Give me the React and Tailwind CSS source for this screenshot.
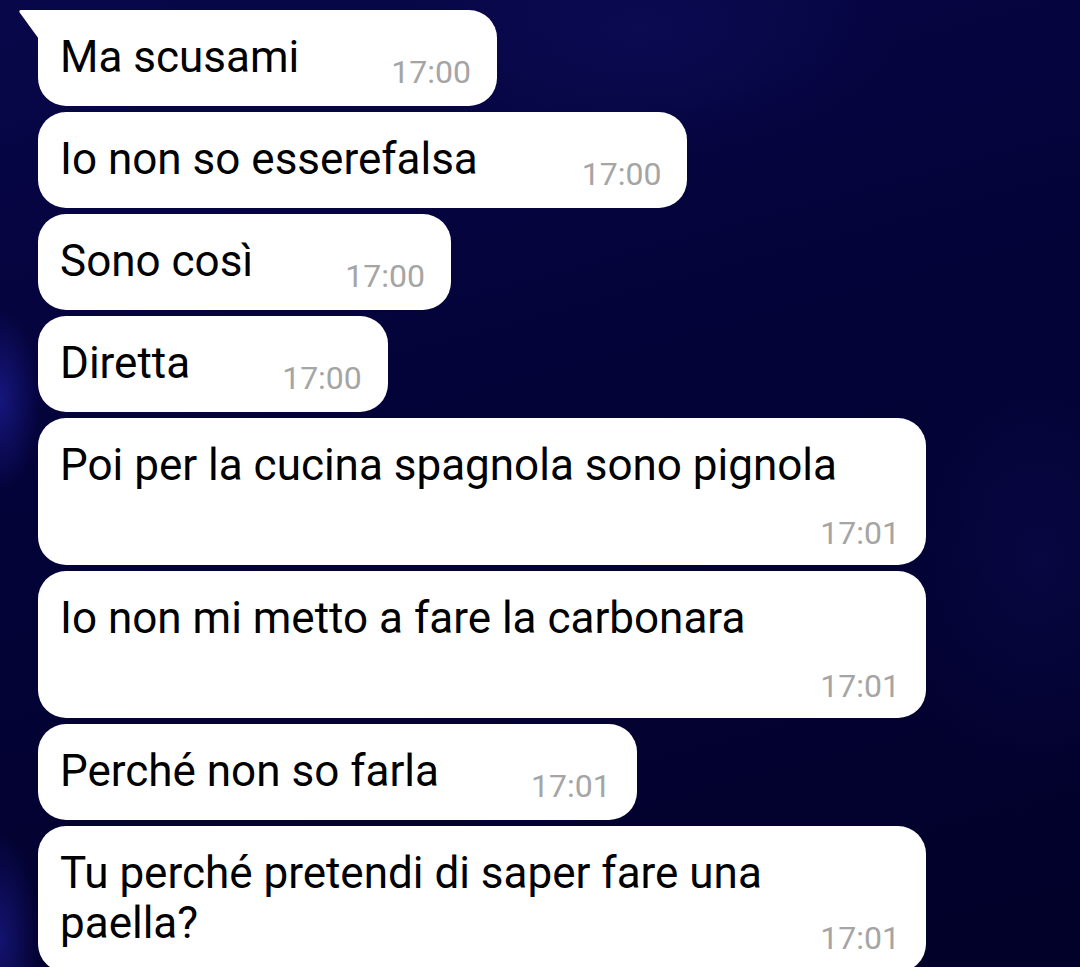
const messages = [
  { text: 'Ma scusami', time: '17:00', tail: true },
  { text: 'Io non so esserefalsa', time: '17:00', wide: true },
  { text: 'Sono così', time: '17:00' },
  { text: 'Diretta', time: '17:00' },
  { text: 'Poi per la cucina spagnola sono pignola', time: '17:01', stacked: true },
  { text: 'Io non mi metto a fare la carbonara', time: '17:01', stacked: true },
  { text: 'Perché non so farla', time: '17:01' },
  { text: 'Tu perché pretendi di saper fare una paella?', time: '17:01', full: true },
];

function Tail() {
  return (
    <svg
      className="absolute -left-[20px] top-0"
      width="20"
      height="30"
      viewBox="0 0 20 30"
    >
      <path d="M20.5 0 H3.2 Q0.4 0 1.8 2.8 L20.5 28.5 Z" fill="#ffffff" />
    </svg>
  );
}

function Bubble({ text, time, tail, wide, stacked, full }) {
  const corners = tail ? 'rounded-[28px] rounded-tl-none' : 'rounded-[28px]';

  if (stacked) {
    return (
      <div className={`relative w-[888px] bg-white pl-[22px] pr-[26px] pt-[22px] pb-[16px] ${corners}`}>
        <div className="text-[44px] leading-[50px] text-black">{text}</div>
        <div className="mt-[27px] flex justify-end text-[32px] leading-none text-[#a5a5a5]">
          {time}
        </div>
      </div>
    );
  }

  return (
    <div
      className={`relative flex bg-white pl-[22px] pr-[26px] pt-[22px] pb-[24px] ${corners} ${full ? 'w-[888px]' : ''}`}
    >
      {tail && <Tail />}
      <div className={`text-[44px] leading-[50px] text-black ${full ? 'flex-1' : ''}`}>{text}</div>
      <div
        className={`self-end -mb-[6px] text-[32px] leading-none text-[#a5a5a5] ${full ? 'ml-0' : wide ? 'ml-[104px]' : 'ml-[92px]'}`}
      >
        {time}
      </div>
    </div>
  );
}

export default function App() {
  return (
    <div className="h-[967px] w-full overflow-hidden font-[Roboto,sans-serif] bg-[radial-gradient(ellipse_40px_90px_at_0px_400px,rgba(40,40,190,0.5),transparent),radial-gradient(ellipse_40px_110px_at_0px_940px,rgba(40,40,190,0.45),transparent),radial-gradient(ellipse_260px_140px_at_640px_30px,rgba(20,20,110,0.35),transparent),radial-gradient(ellipse_160px_220px_at_1040px_560px,rgba(20,20,110,0.25),transparent),linear-gradient(165deg,#08074a_0%,#04033a_35%,#020129_100%)]">
      <div className="flex flex-col items-start gap-[6px] pl-[38px] pt-[10px]">
        {messages.map((m, i) => (
          <Bubble key={i} {...m} />
        ))}
      </div>
    </div>
  );
}
